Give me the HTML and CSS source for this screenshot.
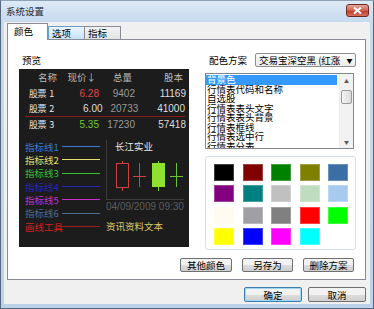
FILE: index.html
```html
<!DOCTYPE html>
<html lang="zh-CN">
<head>
    <meta charset="UTF-8">
    <title>系统设置</title>
    <link rel="stylesheet" href="styles.css">
</head>
<body>
    <div class="window">
        <div class="titlebar">
            <span class="title">系统设置</span>
            <span class="close">
                <svg width="9" height="7" viewBox="0 0 9 7"><path d="M1 0.5 L8 6.5 M8 0.5 L1 6.5" stroke="#fff" stroke-width="2"/></svg>
            </span>
        </div>
        <div class="client">
            <div class="tabs">
                <div class="tab active">颜色</div>
                <div class="tab hover">选项</div>
                <div class="tab">指标</div>
            </div>
            <div class="panel">
                <div class="columns">
                    <!-- preview -->
                    <div class="preview-col">
                        <div class="label">预览</div>
                        <div class="preview">
                            <div class="quote">
                                <div class="qrow head"><span class="c1">名称</span><span class="c2">现价↓</span><span class="c3">总量</span><span class="c4">股本</span></div>
                                <div class="qrow"><span class="c1 name">股票 1</span><span class="c2 up">6.28</span><span class="c3 vol">9402</span><span class="c4">11169</span></div>
                                <div class="qrow picked"><span class="c1 name">股票 2</span><span class="c2">6.00</span><span class="c3 vol">20733</span><span class="c4">41000</span></div>
                                <div class="qrow"><span class="c1 name">股票 3</span><span class="c2 down">5.35</span><span class="c3 vol">17230</span><span class="c4">57418</span></div>
                            </div>
                            <div class="lower">
                                <div class="lines">
                                    <div class="ind i1"><span>指标线1</span><i></i></div>
                                    <div class="ind i2"><span>指标线2</span><i></i></div>
                                    <div class="ind i3"><span>指标线3</span><i></i></div>
                                    <div class="ind i4"><span>指标线4</span><i></i></div>
                                    <div class="ind i5"><span>指标线5</span><i></i></div>
                                    <div class="ind i6"><span>指标线6</span><i></i></div>
                                    <div class="ind i7"><span>画线工具</span><i></i></div>
                                </div>
                                <div class="chartcol">
                                    <div class="chart">
                                        <div class="stock">长江实业</div>
                                        <svg width="77" height="46" viewBox="0 0 77 46">
                                            <line x1="15.5" y1="8" x2="15.5" y2="38" stroke="#d04040"/>
                                            <rect x="9.5" y="10.5" width="12" height="24" fill="#1c1c1c" stroke="#d04040"/>
                                            <line x1="32.5" y1="10" x2="32.5" y2="34" stroke="#d04040"/>
                                            <line x1="26" y1="23.5" x2="39" y2="23.5" stroke="#d04040"/>
                                            <line x1="51.5" y1="8" x2="51.5" y2="38" stroke="#7fd02a"/>
                                            <rect x="45" y="10" width="13" height="24" fill="#8fe030"/>
                                            <line x1="69.5" y1="10" x2="69.5" y2="34" stroke="#70c030"/>
                                            <line x1="63" y1="23.5" x2="76" y2="23.5" stroke="#70c030"/>
                                        </svg>
                                    </div>
                                    <div class="date">04/09/2009 09:30</div>
                                    <div class="info">资讯资料文本</div>
                                </div>
                            </div>
                        </div>
                    </div>

                    <!-- scheme -->
                    <div class="scheme-col">
                        <div class="scheme-row">
                            <span class="label">配色方案</span>
                            <div class="select"><span class="value">交易宝深空黑 (红涨</span><span class="arrow">▼</span></div>
                        </div>
                        <div class="listbox">
                            <div class="items">
                                <div class="item selected">背景色</div>
                                <div class="item">行情表代码和名称</div>
                                <div class="item">自选股</div>
                                <div class="item">行情表表头文字</div>
                                <div class="item">行情表表头背景</div>
                                <div class="item">行情表框线</div>
                                <div class="item">行情表选中行</div>
                                <div class="item">行情表分表</div>
                            </div>
                            <div class="scrollbar">
                                <div class="sb-btn">▲</div>
                                <div class="sb-track"><div class="sb-thumb"></div></div>
                                <div class="sb-btn">▼</div>
                            </div>
                        </div>
                        <div class="palette">
                            <span class="swatch" style="background:#000000"></span>
                            <span class="swatch" style="background:#800000"></span>
                            <span class="swatch" style="background:#008000"></span>
                            <span class="swatch" style="background:#808000"></span>
                            <span class="swatch" style="background:#3a6ea5"></span>
                            <span class="swatch" style="background:#800080"></span>
                            <span class="swatch" style="background:#008080"></span>
                            <span class="swatch" style="background:#c0c0c0"></span>
                            <span class="swatch" style="background:#c0dcc0"></span>
                            <span class="swatch" style="background:#a6caf0"></span>
                            <span class="swatch" style="background:#fffbf0"></span>
                            <span class="swatch" style="background:#a0a0a4"></span>
                            <span class="swatch" style="background:#808080"></span>
                            <span class="swatch" style="background:#ff0000"></span>
                            <span class="swatch" style="background:#00ff00"></span>
                            <span class="swatch" style="background:#ffff00"></span>
                            <span class="swatch" style="background:#0000ff"></span>
                            <span class="swatch" style="background:#ff00ff"></span>
                            <span class="swatch" style="background:#00ffff"></span>
                        </div>
                    </div>
                </div>
                <div class="panel-buttons">
                    <button class="btn w52">其他颜色</button>
                    <button class="btn">另存为</button>
                    <button class="btn">删除方案</button>
                </div>
            </div>
            <div class="dialog-buttons">
                <button class="btn big default">确定</button>
                <button class="btn big">取消</button>
            </div>
        </div>
    </div>
</body>
</html>
```

FILE: styles.css
```css
body {
    margin: 0;
    font-family: "Noto Sans CJK SC", "DejaVu Sans", sans-serif;
    font-size: 9.5px;
    color: #000;
    background: #fff;
}

.window {
    width: 374px;
    height: 309px;
    box-sizing: border-box;
    border: 1px solid #55677b;
    border-top-color: #8fa3b8;
    background: linear-gradient(#c9dbee, #bcd2ea);
    overflow: hidden;
}

.titlebar {
    height: 21px;
    display: flex;
    justify-content: space-between;
    align-items: flex-start;
    background: linear-gradient(#dde9f5, #c6d9ee);
}

.title {
    padding-left: 5px;
    line-height: 21px;
    color: #1e2a36;
}

.close {
    margin-top: 3px;
    margin-right: 4px;
    width: 23px;
    height: 13px;
    box-sizing: border-box;
    border: 1px solid #6e2a20;
    border-radius: 3px;
    background: linear-gradient(#e8a898, #d06050 50%, #bb3a28 51%, #d8705a);
    display: flex;
    align-items: center;
    justify-content: center;
}

.client {
    margin: 0 3px;
    height: 282px;
    background: #f0f0f0;
    padding: 0 4px 0 3px;
    box-sizing: border-box;
}

/* tabs */
.tabs {
    display: flex;
    align-items: flex-end;
    height: 16px;
    padding-top: 1px;
    box-sizing: content-box;
}

.tab {
    height: 13px;
    line-height: 12px;
    box-sizing: border-box;
    border: 1px solid #898c95;
    border-bottom: none;
    margin-left: -1px;
    padding: 0 13px 0 3px;
    background: linear-gradient(#f2f2f2, #e3e3e3);
}

.tab.active {
    height: 17px;
    line-height: 15px;
    margin-left: 0;
    margin-bottom: -1px;
    padding: 0 14px 0 6px;
    background: #fff;
    position: relative;
    z-index: 1;
}

.tab.hover {
    margin-left: 0;
    background: linear-gradient(#eaf5fd, #c8e3f8);
    border-color: #6f9dc4;
    padding-right: 13px;
}

.panel {
    height: 241px;
    box-sizing: border-box;
    border: 1px solid #898c95;
    background: #fff;
}

.columns {
    display: flex;
    gap: 16px;
    padding-left: 11px;
}

/* preview */
.preview-col {
    width: 170px;
}

.preview-col .label {
    margin-top: 13px;
    padding-left: 3px;
    line-height: 14px;
}

.preview {
    margin-top: 2px;
    height: 178px;
    background: #1c1c1c;
    padding-top: 1px;
    box-sizing: border-box;
}

.quote {
    font-family: "Liberation Sans", "Noto Sans CJK SC", sans-serif;
    font-size: 10px;
    color: #dedede;
}

.qrow {
    display: flex;
    height: 15.5px;
    line-height: 15.5px;
}

.qrow.picked {
    height: 15.5px;
    box-sizing: border-box;
    border-bottom: 1px solid #8a1c1c;
    margin: 0 4px 0 6px;
}

.qrow.picked .c1 {
    width: 35px;
    padding-left: 4px;
}

.qrow.picked .c4 {
    width: 47px;
}

.qrow span {
    display: block;
    text-align: right;
}

.c1 { width: 38px; }
.c2 { width: 39px; }
.c3 { width: 36px; }
.c4 { width: 51px; }

.head {
    font-family: "Noto Sans CJK SC", sans-serif;
    font-size: 9.5px;
    color: #bdbdbd;
}

.qrow .name {
    text-align: left;
    padding-left: 10px;
    width: 31px;
    font-family: "Noto Sans CJK SC", sans-serif;
    font-size: 9px;
    letter-spacing: -0.6px;
    word-spacing: 2px;
    white-space: nowrap;
    color: #e8e8e8;
}

.up { color: #e04848; }
.down { color: #78c830; }
.vol { color: #9a9a9a; }

.lower {
    display: flex;
    margin-top: 8px;
    padding-left: 6px;
    gap: 6px;
}

.lines {
    width: 75px;
}

.ind {
    display: flex;
    align-items: center;
    height: 13.33px;
}

.ind span {
    width: 37px;
    white-space: nowrap;
}

.ind i {
    width: 38px;
    height: 1px;
    background: currentColor;
}

.i1 { color: #3b7dd4; }
.i2 { color: #e6e070; }
.i3 { color: #34c234; }
.i4 { color: #2424b8; }
.i5 { color: #c632cc; }
.i6 { color: #4d6c92; }
.i7 { color: #d82020; }
.i7 i { background: #a01818; }

.chartcol {
    width: 78px;
}

.chart {
    height: 60px;
    box-sizing: border-box;
    border-left: 1px solid #3c3c3c;
    border-bottom: 1px solid #3c3c3c;
}

.chart svg {
    display: block;
}

.stock {
    color: #e8e8e8;
    line-height: 13px;
    padding-left: 8px;
}

.date {
    font-family: "Liberation Sans", sans-serif;
    font-size: 10px;
    line-height: 13px;
    color: #5c5c5c;
    white-space: nowrap;
}

.info {
    margin-top: 7px;
    line-height: 13px;
    color: #dcc868;
    white-space: nowrap;
}

/* scheme */
.scheme-col {
    width: 151px;
}

.scheme-row {
    margin-top: 13px;
    display: flex;
    align-items: center;
    gap: 8px;
    padding-left: 4px;
    height: 14px;
}

.scheme-row .label {
    flex: none;
    white-space: nowrap;
}

.select {
    flex: none;
    width: 101px;
    height: 14px;
    box-sizing: border-box;
    border: 1px solid #8e8f8f;
    border-radius: 2px;
    background: linear-gradient(#fbfbfb, #ececec);
    display: flex;
    align-items: center;
    overflow: hidden;
}

.select .value {
    flex: 1;
    padding-left: 3px;
    white-space: nowrap;
    overflow: hidden;
    line-height: 12px;
}

.select .arrow {
    font-size: 6px;
    width: 9px;
    padding-right: 1px;
    text-align: center;
}

.listbox {
    margin-top: 6px;
    width: 149px;
    height: 76px;
    box-sizing: border-box;
    border: 1px solid #828790;
    display: flex;
    overflow: hidden;
}

.items {
    flex: 1;
    padding-top: 1px;
    overflow: hidden;
}

.item {
    line-height: 9.5px;
    height: 9.5px;
    white-space: nowrap;
    padding-left: 1px;
}

.item.selected {
    background: #3399ff;
    color: #fff;
    margin-right: 2px;
}

.scrollbar {
    width: 13px;
    display: flex;
    flex-direction: column;
    background: #f2f2f2;
    border-left: 1px solid #ececec;
}

.sb-btn {
    height: 13px;
    font-size: 5px;
    line-height: 13px;
    text-align: center;
    color: #5a5a5a;
}

.sb-track {
    flex: 1;
    padding-top: 3px;
}

.sb-thumb {
    height: 12px;
    margin: 0 1px;
    border: 1px solid #9a9a9a;
    border-radius: 2px;
    background: linear-gradient(90deg, #f4f4f4, #dcdcdc);
}

.palette {
    margin-top: 7px;
    height: 94px;
    box-sizing: border-box;
    border: 1px solid #d5dfe5;
    border-radius: 3px;
    padding: 7px 0 0 8px;
    display: grid;
    grid-template-columns: repeat(5, 20px);
    grid-auto-rows: 17px;
    column-gap: 8.5px;
    row-gap: 4.3px;
}

.swatch {
    display: block;
    box-shadow: inset 0 0 0 1px rgba(255, 255, 255, 0.25);
}

/* buttons */
.panel-buttons {
    margin-top: 8px;
    display: flex;
    justify-content: flex-end;
    gap: 10px;
    padding-right: 11px;
}

.btn {
    width: 51px;
    height: 14px;
    padding: 0;
    box-sizing: border-box;
    border: 1px solid #707070;
    border-radius: 2px;
    background: linear-gradient(#f2f2f2 50%, #dddddd 51%, #cfcfcf);
    font-family: "Noto Sans CJK SC", sans-serif;
    font-size: 9.5px;
    line-height: 12px;
    color: #000;
}

.btn.w52 {
    width: 52px;
}

.dialog-buttons {
    margin-top: 7px;
    display: flex;
    justify-content: flex-end;
    gap: 6px;
}

.btn.big {
    width: 58px;
    height: 15px;
}

.btn.default {
    border-color: #3c7fb1;
    box-shadow: inset 0 0 0 1px #9ed5f5;
}
```
